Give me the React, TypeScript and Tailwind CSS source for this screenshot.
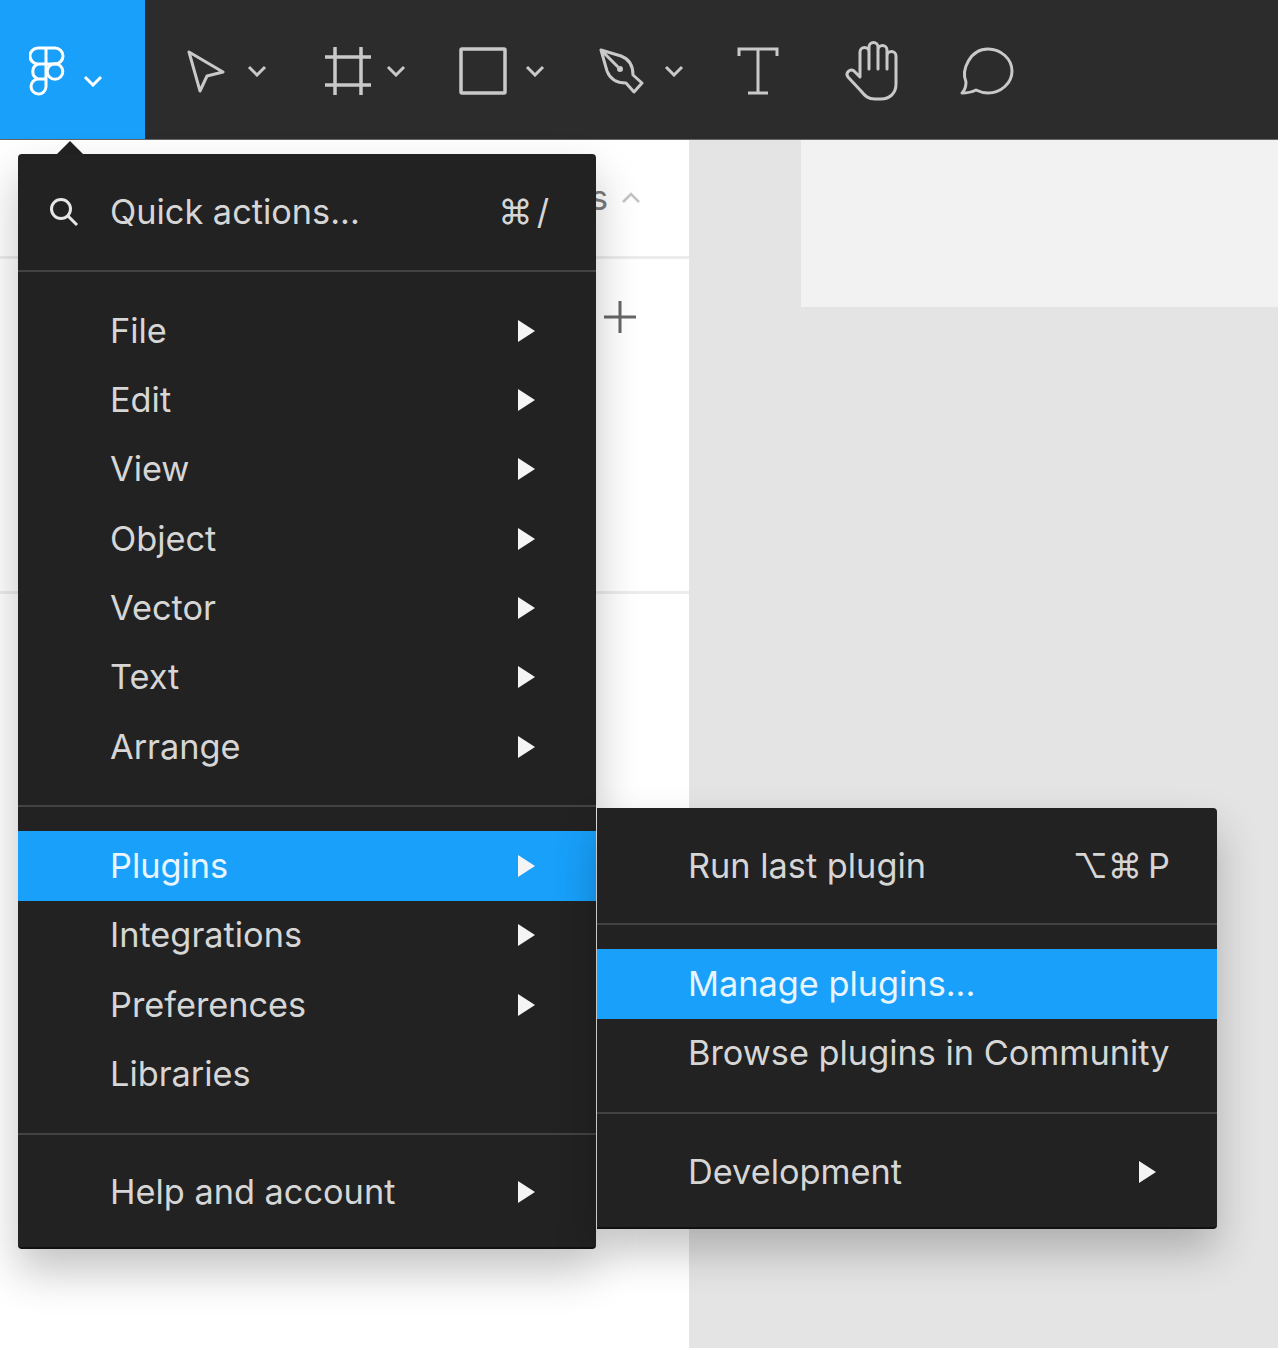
const items = ['File', 'Edit', 'View', 'Object', 'Vector', 'Text', 'Arrange'];
const lowerItems = ['Plugins', 'Integrations', 'Preferences'];

function Chevron({ className = '' }: { className?: string }) {
  return (
    <svg width="20" height="12" viewBox="0 0 20 12" fill="none" stroke="currentColor" strokeWidth="3" className={className}>
      <path d="M2 2l8 8 8-8" />
    </svg>
  );
}

function Arrow() {
  return (
    <svg width="17" height="22" viewBox="0 0 17 22" className="shrink-0" fill="#f4f4f4">
      <path d="M0 0l17 11L0 22z" />
    </svg>
  );
}

function Divider() {
  return <div className="h-[2px] bg-[#434343]" />;
}

function Row({ label, arrow = true, active = false, sub = false }: { label: string; arrow?: boolean; active?: boolean; sub?: boolean }) {
  return (
    <div
      className={`flex h-[69.33px] items-center justify-between whitespace-nowrap pr-[61px] ${sub ? 'pl-[91px]' : 'pl-[92px]'} ${
        active ? 'bg-[#18a0fb] text-[#e8f5ff]' : 'text-[#d6d6d6]'
      }`}
    >
      <span>{label}</span>
      {arrow && <Arrow />}
    </div>
  );
}

function Toolbar() {
  return (
    <div className="flex h-[140px] border-b border-[#666] bg-[#2c2c2c] text-[#c9c9c9]">
      <div className="flex h-full w-[145px] items-start bg-[#18a0fb] pl-[29px] pt-[46px] text-white">
        <svg width="36" height="50" viewBox="0 0 36 50" fill="none" stroke="currentColor" strokeWidth="3">
          <path d="M17 2H9a8 8 0 0 0 0 16h8zM17 2h9a8 8 0 0 1 0 16h-9zM17 18H9a8 8 0 0 0 0 15h8zM17 33H9a7.500 7.500 0 1 0 8 8z" />
          <circle cx="26" cy="25.500" r="7.800" />
        </svg>
        <Chevron className="ml-[18px] mt-[29px]" />
      </div>

      <div className="flex flex-1 items-center pt-[3px]">
        <svg width="38" height="44" viewBox="0 0 38 44" fill="none" stroke="currentColor" strokeWidth="3" strokeLinejoin="round" className="ml-[42px]">
          <path d="M2 3l34 20-16 4-7 15z" />
        </svg>
        <Chevron className="ml-[22px]" />

        <svg width="48" height="50" viewBox="0 0 48 50" fill="none" stroke="currentColor" strokeWidth="3.500" className="ml-[57px]">
          <path d="M11 1v48M37 1v48M1 11h46M1 39h46" />
        </svg>
        <Chevron className="ml-[14px]" />

        <svg width="48" height="48" viewBox="0 0 48 48" fill="none" stroke="currentColor" strokeWidth="3.500" className="ml-[53px]">
          <rect x="2" y="2" width="44" height="44" rx="1" />
        </svg>
        <Chevron className="ml-[18px]" />

        <svg width="46" height="46" viewBox="0 0 46 46" fill="none" stroke="currentColor" strokeWidth="3" strokeLinejoin="round" className="ml-[54px]">
          <path d="M2 2l20 6c8 3 12 10 12 19l9 8-8 9-8-9c-9 0-16-4-19-12zM2 2l17 17" />
          <circle cx="21" cy="21" r="3" fill="currentColor" stroke="none" />
        </svg>
        <Chevron className="ml-[19px]" />

        <svg width="42" height="50" viewBox="0 0 42 50" fill="none" stroke="currentColor" strokeWidth="3" className="ml-[53px]">
          <path d="M2 10V3h38v7M21 3v44M11 47h20" />
        </svg>

        <svg width="54" height="60" viewBox="0 0 54 60" fill="none" stroke="currentColor" strokeWidth="3" strokeLinecap="round" strokeLinejoin="round" className="ml-[66px]">
          <path d="M15 30V11a4.500 4.500 0 0 1 9 0v17M24 28V6a4.500 4.500 0 0 1 9 0v22M33 28V9a4.500 4.500 0 0 1 9 0v19M42 28V15a4.500 4.500 0 0 1 9 0v28c0 9-6 15-15 15h-6c-7 0-10-3-14-8L3 36c-3-4 2-9 6-6l6 6v-6" />
        </svg>

        <svg width="54" height="48" viewBox="0 0 54 48" fill="none" stroke="currentColor" strokeWidth="3" strokeLinejoin="round" className="ml-[61px]">
          <path d="M2 46c3-3 4-7 4-11-5-12 4-33 22-33 13 0 24 10 24 22S41 46 28 46c-5 0-8-1-12-3-4 2-9 3-14 3z" />
        </svg>
      </div>
    </div>
  );
}

export default function App() {
  return (
    <div className="relative h-[1350px] w-[1280px] overflow-hidden bg-white [font-family:Inter,sans-serif] text-[34.300px] leading-[48px]">
      <div className="w-[1278px]">
        <Toolbar />
        <div className="flex h-[1208px]">
          {/* Layers panel */}
          <div className="w-[689px] bg-white">
            <div className="flex h-[119px] items-end justify-end border-b-[3px] border-[#ececec] pb-[52px] pr-[48px]">
              <svg width="20" height="12" viewBox="0 0 20 12" fill="none" stroke="#c4c4c4" strokeWidth="2.500">
                <path d="M2 10l8-8 8 8" />
              </svg>
            </div>
            <div className="flex h-[335px] items-start justify-end border-b-[3px] border-[#ececec] pr-[52px] pt-[41px]">
              <svg width="34" height="34" viewBox="0 0 34 34" fill="none" stroke="#666" strokeWidth="3">
                <path d="M17 1v32M1 17h32" />
              </svg>
            </div>
          </div>
          {/* Canvas */}
          <div className="flex-1 bg-[#e4e4e4]">
            <div className="ml-[112px] h-[167px] bg-[#f2f2f2]" />
          </div>
        </div>
      </div>

      {/* letter cut off by the menu */}
      <span className="absolute left-[590px] top-[174px] text-[#7a7a7a]">s</span>

      <div className="absolute left-[56px] top-[141px] h-0 w-0 border-x-[14px] border-b-[14px] border-x-transparent border-b-[#222]" />

      {/* Main menu */}
      <div className="absolute left-[18px] top-[154px] h-[1095px] w-[578px] rounded-[4px] border-b-2 border-[#111] bg-[#222] shadow-[0_22px_44px_rgba(0,0,0,0.24)]">
        <div className="flex h-[116px] items-center justify-between pl-[31px] pr-[47px] text-[#d6d6d6]">
          <div className="flex items-center">
            <svg width="30" height="30" viewBox="0 0 30 30" fill="none" stroke="#e6e6e6" strokeWidth="3" className="mr-[31px]">
              <circle cx="12" cy="12" r="9.500" />
              <path d="M19 19l9 9" />
            </svg>
            <span>Quick actions...</span>
          </div>
          <span className="flex gap-[4px]">
            <span>⌘</span>
            <span>/</span>
          </span>
        </div>
        <Divider />
        <div className="py-[24px]">
          {items.map((item) => (
            <Row key={item} label={item} />
          ))}
        </div>
        <Divider />
        <div className="py-[24px]">
          {lowerItems.map((item) => (
            <Row key={item} label={item} active={item === 'Plugins'} />
          ))}
          <Row label="Libraries" arrow={false} />
        </div>
        <Divider />
        <div className="pt-[23px]">
          <Row label="Help and account" />
        </div>
      </div>

      {/* Plugins submenu */}
      <div className="absolute left-[597px] top-[808px] h-[421px] w-[620px] rounded-r-[4px] border-b-2 border-[#111] bg-[#222] shadow-[0_22px_44px_rgba(0,0,0,0.24)]">
        <div className="py-[23px]">
          <div className="flex h-[69.33px] items-center justify-between pl-[91px] pr-[47px] text-[#d6d6d6]">
            <span>Run last plugin</span>
            <span className="flex gap-[6px]">
              <span>⌥⌘</span>
              <span>P</span>
            </span>
          </div>
        </div>
        <Divider />
        <div className="py-[24px]">
          <Row label="Manage plugins..." arrow={false} active sub />
          <Row label="Browse plugins in Community" arrow={false} sub />
        </div>
        <Divider />
        <div className="pt-[23px]">
          <Row label="Development" sub />
        </div>
      </div>
    </div>
  );
}
